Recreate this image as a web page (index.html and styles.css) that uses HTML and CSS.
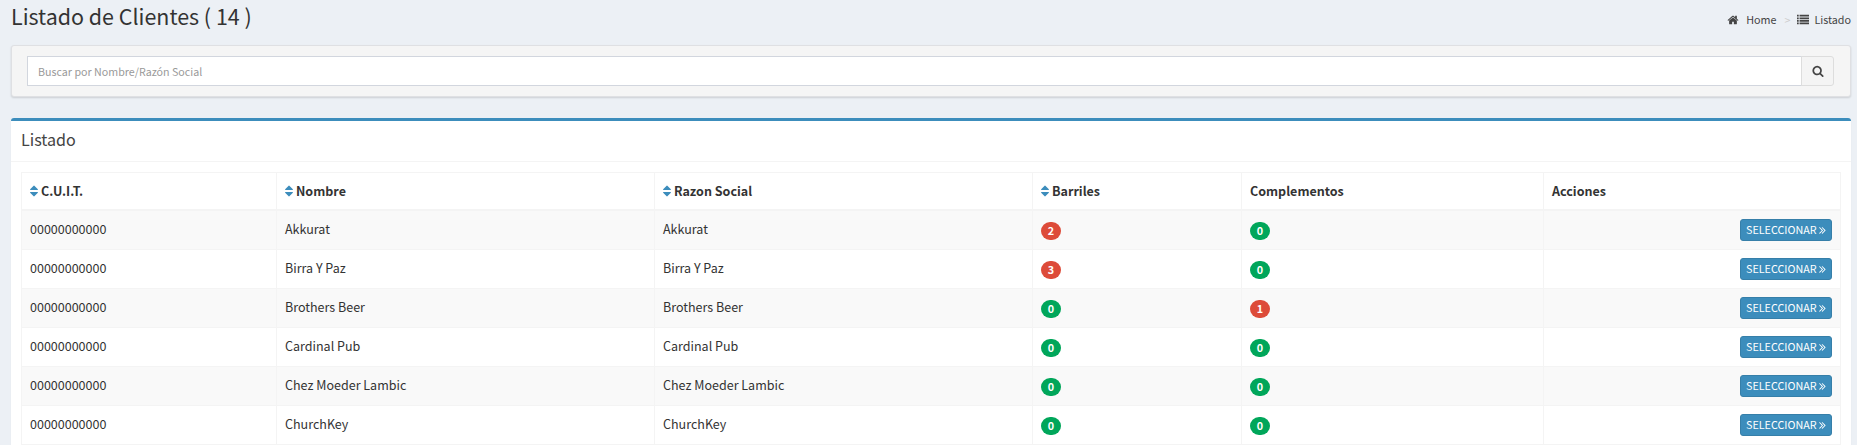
FILE: index.html
```html
<!DOCTYPE html>
<html lang="es">
<head>
<meta charset="utf-8">
<title>Listado de Clientes</title>
<link rel="stylesheet" href="styles.css">
</head>
<body>
<svg class="sprite" aria-hidden="true">
  <symbol id="home" viewBox="0 0 1792 1792"><path d="M1472 992v480q0 26-19 45t-45 19h-384v-384h-256v384h-384q-26 0-45-19t-19-45v-480q0-1 .5-3t.5-3l575-474 575 474q1 2 1 6zm223-69l-62 74q-8 9-21 11h-3q-13 0-21-7l-692-577-692 577q-12 8-24 7-13-2-21-11l-62-74q-8-10-7-23.5t11-21.5l719-599q32-26 76-26t76 26l244 204v-195q0-14 9-23t23-9h192q14 0 23 9t9 23v408l219 182q10 8 11 21.5t-7 23.5z"/></symbol>
  <symbol id="list" viewBox="0 0 1792 1792"><path d="M0 128h256v256H0zM384 128h1408v256H384zM0 512h256v256H0zM384 512h1408v256H384zM0 896h256v256H0zM384 896h1408v256H384zM0 1280h256v256H0zM384 1280h1408v256H384z"/></symbol>
  <symbol id="search" viewBox="0 0 1792 1792"><path d="M1216 832q0-185-131.5-316.5t-316.5-131.5-316.5 131.5-131.5 316.5 131.5 316.5 316.5 131.5 316.5-131.5 131.5-316.5zm512 832q0 52-38 90t-90 38q-54 0-90-38l-343-342q-179 124-399 124-143 0-273.5-55.5t-225-150-150-225-55.5-273.5 55.5-273.5 150-225 225-150 273.5-55.5 273.5 55.5 225 150 150 225 55.5 273.5q0 220-124 399l343 343q37 37 37 90z"/></symbol>
  <symbol id="sort" viewBox="384 0 1024 1792"><path d="M1408 1088q0 26-19 45l-448 448q-19 19-45 19t-45-19l-448-448q-19-19-19-45t19-45 45-19h896q26 0 45 19t19 45zm0-384q0 26-19 45t-45 19h-896q-26 0-45-19t-19-45 19-45l448-448q19-19 45-19t45 19l448 448q19 19 19 45z"/></symbol>
  <symbol id="next" viewBox="384 0 1024 1792"><path d="M979 960q0 13-10 23l-466 466q-10 10-23 10t-23-10l-50-50q-10-10-10-23t10-23l393-393-393-393q-10-10-10-23t10-23l50-50q10-10 23-10t23 10l466 466q10 10 10 23zm384 0q0 13-10 23l-466 466q-10 10-23 10t-23-10l-50-50q-10-10-10-23t10-23l393-393-393-393q-10-10-10-23t10-23l50-50q10-10 23-10t23 10l466 466q10 10 10 23z"/></symbol>
</svg>

<header class="page-header">
  <h1 class="page-title">Listado de Clientes ( 14 )</h1>
  <nav class="breadcrumb">
    <a class="crumb"><svg class="icon-home"><use href="#home"/></svg>Home</a>
    <span class="separator">&gt;</span>
    <span class="crumb crumb-current"><svg class="icon-list"><use href="#list"/></svg>Listado</span>
  </nav>
</header>

<form class="well">
  <input class="search-input" type="text" placeholder="Buscar por Nombre/Razón Social">
  <button class="search-button" type="button" aria-label="Buscar"><svg class="icon-search"><use href="#search"/></svg></button>
</form>

<section class="box">
  <h2 class="box-title">Listado</h2>
  <div class="box-body">
    <table class="clients">
      <colgroup><col class="col-cuit"><col class="col-name"><col class="col-name"><col class="col-barrels"><col class="col-extras"><col class="col-actions"></colgroup>
      <thead>
        <tr>
          <th><svg class="icon-sort"><use href="#sort"/></svg>C.U.I.T.</th>
          <th><svg class="icon-sort"><use href="#sort"/></svg>Nombre</th>
          <th><svg class="icon-sort"><use href="#sort"/></svg>Razon Social</th>
          <th><svg class="icon-sort"><use href="#sort"/></svg>Barriles</th>
          <th>Complementos</th>
          <th>Acciones</th>
        </tr>
      </thead>
      <tbody>
        <tr><td>00000000000</td><td>Akkurat</td><td>Akkurat</td><td><span class="badge red">2</span></td><td><span class="badge green">0</span></td><td class="actions"><a class="select">SELECCIONAR<svg class="icon-next"><use href="#next"/></svg></a></td></tr>
        <tr><td>00000000000</td><td>Birra Y Paz</td><td>Birra Y Paz</td><td><span class="badge red">3</span></td><td><span class="badge green">0</span></td><td class="actions"><a class="select">SELECCIONAR<svg class="icon-next"><use href="#next"/></svg></a></td></tr>
        <tr><td>00000000000</td><td>Brothers Beer</td><td>Brothers Beer</td><td><span class="badge green">0</span></td><td><span class="badge red">1</span></td><td class="actions"><a class="select">SELECCIONAR<svg class="icon-next"><use href="#next"/></svg></a></td></tr>
        <tr><td>00000000000</td><td>Cardinal Pub</td><td>Cardinal Pub</td><td><span class="badge green">0</span></td><td><span class="badge green">0</span></td><td class="actions"><a class="select">SELECCIONAR<svg class="icon-next"><use href="#next"/></svg></a></td></tr>
        <tr><td>00000000000</td><td>Chez Moeder Lambic</td><td>Chez Moeder Lambic</td><td><span class="badge green">0</span></td><td><span class="badge green">0</span></td><td class="actions"><a class="select">SELECCIONAR<svg class="icon-next"><use href="#next"/></svg></a></td></tr>
        <tr><td>00000000000</td><td>ChurchKey</td><td>ChurchKey</td><td><span class="badge green">0</span></td><td><span class="badge green">0</span></td><td class="actions"><a class="select">SELECCIONAR<svg class="icon-next"><use href="#next"/></svg></a></td></tr>
      </tbody>
    </table>
  </div>
</section>
</body>
</html>
```

FILE: styles.css
```css
* { box-sizing: border-box; }

body {
  margin: 0;
  height: 445px;
  padding: 0 6px 0 11px;
  overflow: hidden;
  background: #ecf0f5;
  color: #333;
  font-family: "Noto Sans CJK SC", "Noto Sans", sans-serif;
  font-size: 12.53px;
  line-height: 20px;
}

svg { display: block; flex: none; fill: currentColor; }
.sprite { position: absolute; width: 0; height: 0; }

.page-header {
  display: flex;
  justify-content: space-between;
  height: 45px;
}

.page-title {
  margin: 0;
  padding-top: 3px;
  font-size: 21.45px;
  font-weight: 400;
  line-height: 26px;
}

.breadcrumb {
  display: flex;
  height: 17px;
  margin-top: 11px;
  color: #444;
  font-size: 10.75px;
  line-height: 17px;
}

.crumb { display: flex; align-items: center; }
.separator { margin: 0 7px 0 8px; color: #ccc; }
.icon-home { width: 12px; height: 12px; margin-right: 7px; }
.icon-list { width: 12px; height: 12px; margin-right: 5px; }

.well {
  display: flex;
  height: 52px;
  margin: 0 0 21px;
  padding: 10px 16px 10px 15px;
  border: 1px solid #dfe0e3;
  border-radius: 3px;
  background: #f5f5f5;
  box-shadow: 0 1px 2px rgba(0, 0, 0, .14);
}

.search-input {
  flex: 1;
  height: 30px;
  min-width: 0;
  padding: 1px 10px 0;
  border: 1px solid #d2d6de;
  border-radius: 0;
  background: #fff;
  font: 10.7px/18px "Noto Sans CJK SC", "Noto Sans", sans-serif;
}

.search-input::placeholder { color: #999; opacity: 1; }

.search-button {
  display: flex;
  align-items: center;
  justify-content: center;
  width: 33px;
  height: 30px;
  margin-left: -1px;
  padding: 0;
  border: 1px solid #ddd;
  border-radius: 0 3px 3px 0;
  background: #f4f4f4;
  color: #444;
}

.icon-search { width: 12px; height: 12px; }

.box {
  height: 327px;
  border-top: 3px solid #3c8dbc;
  border-radius: 3px 3px 0 0;
  background: #fff;
  box-shadow: 0 1px 1px rgba(0, 0, 0, .1);
}

.box-title {
  height: 41px;
  margin: 0;
  padding: 8px 10px 0;
  border-bottom: 1px solid #f4f4f4;
  color: #444;
  font-size: 16.1px;
  font-weight: 400;
  line-height: 20px;
}

.box-body { padding: 10px 10px 0; }

.clients {
  width: 1820px;
  table-layout: fixed;
  border-collapse: separate;
  border-spacing: 0;
  border-top: 1px solid #f4f4f4;
  border-right: 1px solid #f4f4f4;
}

.col-cuit { width: 255px; }
.col-name { width: 378px; }
.col-barrels { width: 209px; }
.col-extras { width: 302px; }
.col-actions { width: 297px; }

th, td {
  padding: 0 8px;
  border-left: 1px solid #f4f4f4;
  border-bottom: 1px solid #f4f4f4;
  text-align: left;
  vertical-align: top;
}

th { height: 38px; padding-top: 8px; border-bottom-width: 2px; font-weight: 700; }
td { height: 39px; padding-top: 8px; }
tbody tr:nth-child(odd) { background: #f9f9f9; }

.icon-sort {
  display: inline-block;
  width: 8px;
  height: 14px;
  margin-right: 3px;
  color: #3c8dbc;
  vertical-align: -2px;
}

.badge {
  display: block;
  width: 20px;
  height: 18px;
  margin-top: 3px;
  border-radius: 9px;
  color: #fff;
  font-size: 10.75px;
  font-weight: 700;
  line-height: 18px;
  text-align: center;
}

.red { background: #dd4b39; }
.green { background: #00a65a; }

.select {
  display: flex;
  align-items: center;
  width: 92px;
  height: 22px;
  margin-left: auto;
  padding: 0 5px;
  border: 1px solid #367fa9;
  border-radius: 3px;
  background: #3c8dbc;
  color: #fff;
  font-size: 10.75px;
  line-height: 18px;
}

.icon-next { width: 7px; height: 12px; margin-left: 2px; }
```
